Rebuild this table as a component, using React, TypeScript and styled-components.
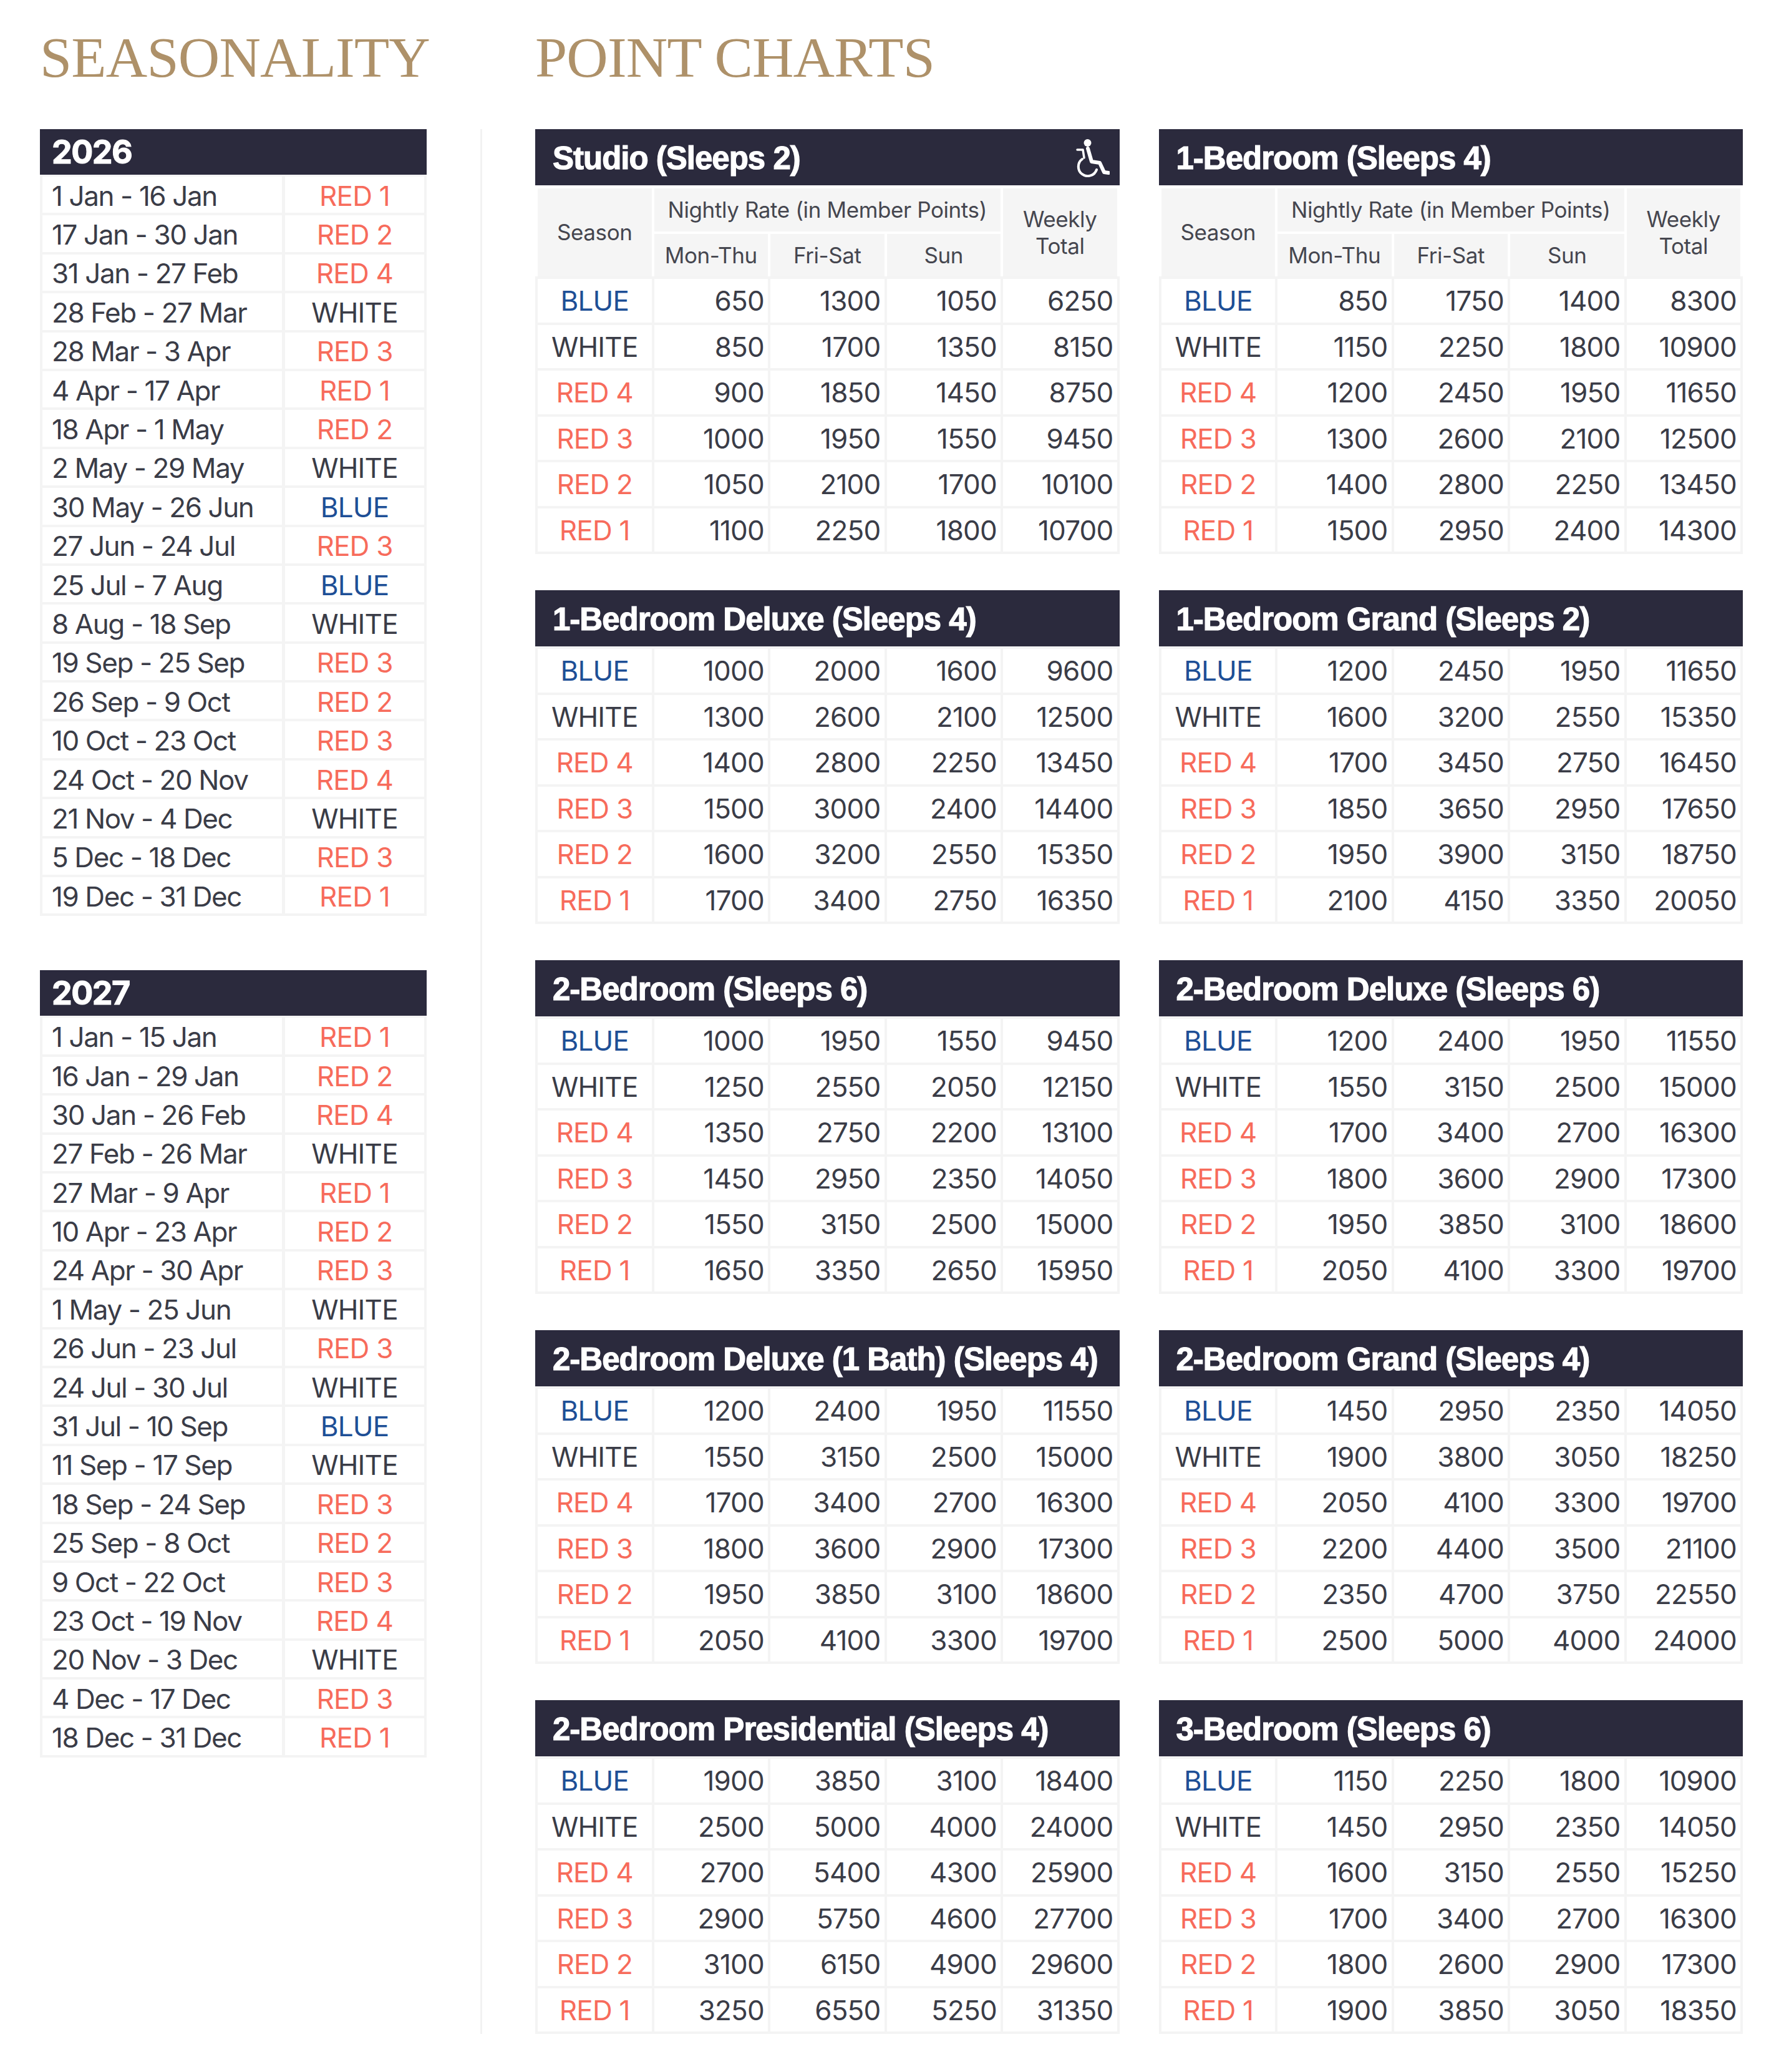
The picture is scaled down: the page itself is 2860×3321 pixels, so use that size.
import React from "react";
import styled, { createGlobalStyle } from "styled-components";

type Season = "BLUE" | "WHITE" | "RED 1" | "RED 2" | "RED 3" | "RED 4";

const GlobalStyle = createGlobalStyle`
  body {
    margin: 0;
    background: #ffffff;
    font-family: "Inter", "Liberation Sans", sans-serif;
    color: #3a3c47;
  }
`;

const seasonColor = (s: Season) =>
  s === "BLUE" ? "#1e4f96" : s === "WHITE" ? "#3a3c47" : "#f76b5b";

const year2026: [string, Season][] = [
  ["1 Jan - 16 Jan", "RED 1"],
  ["17 Jan - 30 Jan", "RED 2"],
  ["31 Jan - 27 Feb", "RED 4"],
  ["28 Feb - 27 Mar", "WHITE"],
  ["28 Mar - 3 Apr", "RED 3"],
  ["4 Apr - 17 Apr", "RED 1"],
  ["18 Apr - 1 May", "RED 2"],
  ["2 May - 29 May", "WHITE"],
  ["30 May - 26 Jun", "BLUE"],
  ["27 Jun - 24 Jul", "RED 3"],
  ["25 Jul - 7 Aug", "BLUE"],
  ["8 Aug - 18 Sep", "WHITE"],
  ["19 Sep - 25 Sep", "RED 3"],
  ["26 Sep - 9 Oct", "RED 2"],
  ["10 Oct - 23 Oct", "RED 3"],
  ["24 Oct - 20 Nov", "RED 4"],
  ["21 Nov - 4 Dec", "WHITE"],
  ["5 Dec - 18 Dec", "RED 3"],
  ["19 Dec - 31 Dec", "RED 1"],
];

const year2027: [string, Season][] = [
  ["1 Jan - 15 Jan", "RED 1"],
  ["16 Jan - 29 Jan", "RED 2"],
  ["30 Jan - 26 Feb", "RED 4"],
  ["27 Feb - 26 Mar", "WHITE"],
  ["27 Mar - 9 Apr", "RED 1"],
  ["10 Apr - 23 Apr", "RED 2"],
  ["24 Apr - 30 Apr", "RED 3"],
  ["1 May - 25 Jun", "WHITE"],
  ["26 Jun - 23 Jul", "RED 3"],
  ["24 Jul - 30 Jul", "WHITE"],
  ["31 Jul - 10 Sep", "BLUE"],
  ["11 Sep - 17 Sep", "WHITE"],
  ["18 Sep - 24 Sep", "RED 3"],
  ["25 Sep - 8 Oct", "RED 2"],
  ["9 Oct - 22 Oct", "RED 3"],
  ["23 Oct - 19 Nov", "RED 4"],
  ["20 Nov - 3 Dec", "WHITE"],
  ["4 Dec - 17 Dec", "RED 3"],
  ["18 Dec - 31 Dec", "RED 1"],
];

const seasons: Season[] = ["BLUE", "WHITE", "RED 4", "RED 3", "RED 2", "RED 1"];

interface Chart {
  title: string;
  accessible?: boolean;
  rows: number[][];
}

const charts: Chart[] = [
  {
    title: "Studio (Sleeps 2)",
    accessible: true,
    rows: [
      [650, 1300, 1050, 6250],
      [850, 1700, 1350, 8150],
      [900, 1850, 1450, 8750],
      [1000, 1950, 1550, 9450],
      [1050, 2100, 1700, 10100],
      [1100, 2250, 1800, 10700],
    ],
  },
  {
    title: "1-Bedroom (Sleeps 4)",
    rows: [
      [850, 1750, 1400, 8300],
      [1150, 2250, 1800, 10900],
      [1200, 2450, 1950, 11650],
      [1300, 2600, 2100, 12500],
      [1400, 2800, 2250, 13450],
      [1500, 2950, 2400, 14300],
    ],
  },
  {
    title: "1-Bedroom Deluxe (Sleeps 4)",
    rows: [
      [1000, 2000, 1600, 9600],
      [1300, 2600, 2100, 12500],
      [1400, 2800, 2250, 13450],
      [1500, 3000, 2400, 14400],
      [1600, 3200, 2550, 15350],
      [1700, 3400, 2750, 16350],
    ],
  },
  {
    title: "1-Bedroom Grand (Sleeps 2)",
    rows: [
      [1200, 2450, 1950, 11650],
      [1600, 3200, 2550, 15350],
      [1700, 3450, 2750, 16450],
      [1850, 3650, 2950, 17650],
      [1950, 3900, 3150, 18750],
      [2100, 4150, 3350, 20050],
    ],
  },
  {
    title: "2-Bedroom (Sleeps 6)",
    rows: [
      [1000, 1950, 1550, 9450],
      [1250, 2550, 2050, 12150],
      [1350, 2750, 2200, 13100],
      [1450, 2950, 2350, 14050],
      [1550, 3150, 2500, 15000],
      [1650, 3350, 2650, 15950],
    ],
  },
  {
    title: "2-Bedroom Deluxe (Sleeps 6)",
    rows: [
      [1200, 2400, 1950, 11550],
      [1550, 3150, 2500, 15000],
      [1700, 3400, 2700, 16300],
      [1800, 3600, 2900, 17300],
      [1950, 3850, 3100, 18600],
      [2050, 4100, 3300, 19700],
    ],
  },
  {
    title: "2-Bedroom Deluxe (1 Bath) (Sleeps 4)",
    rows: [
      [1200, 2400, 1950, 11550],
      [1550, 3150, 2500, 15000],
      [1700, 3400, 2700, 16300],
      [1800, 3600, 2900, 17300],
      [1950, 3850, 3100, 18600],
      [2050, 4100, 3300, 19700],
    ],
  },
  {
    title: "2-Bedroom Grand (Sleeps 4)",
    rows: [
      [1450, 2950, 2350, 14050],
      [1900, 3800, 3050, 18250],
      [2050, 4100, 3300, 19700],
      [2200, 4400, 3500, 21100],
      [2350, 4700, 3750, 22550],
      [2500, 5000, 4000, 24000],
    ],
  },
  {
    title: "2-Bedroom Presidential (Sleeps 4)",
    rows: [
      [1900, 3850, 3100, 18400],
      [2500, 5000, 4000, 24000],
      [2700, 5400, 4300, 25900],
      [2900, 5750, 4600, 27700],
      [3100, 6150, 4900, 29600],
      [3250, 6550, 5250, 31350],
    ],
  },
  {
    title: "3-Bedroom (Sleeps 6)",
    rows: [
      [1150, 2250, 1800, 10900],
      [1450, 2950, 2350, 14050],
      [1600, 3150, 2550, 15250],
      [1700, 3400, 2700, 16300],
      [1800, 2600, 2900, 17300],
      [1900, 3850, 3050, 18350],
    ],
  },
];

const WheelchairIcon = () => (
  <svg width="54" height="62" viewBox="0 0 54 62" fill="none">
    <circle cx="18.5" cy="7" r="6" fill="#fff" />
    <path
      d="M19 16 L25 37 L38 39 L45 54 L52 55"
      stroke="#fff"
      strokeWidth="6"
      strokeLinecap="round"
      strokeLinejoin="round"
    />
    <path
      d="M2 18 L11 18 L13 31"
      stroke="#fff"
      strokeWidth="3.5"
      strokeLinecap="round"
      strokeLinejoin="round"
    />
    <path
      d="M10 33 A15 15 0 1 0 33 50"
      stroke="#fff"
      strokeWidth="4"
      strokeLinecap="round"
    />
  </svg>
);

const App: React.FC = () => {
  return (
    <>
      <GlobalStyle />
      <Page>
        <Title $col={1}>SEASONALITY</Title>
        <Title $col={3}>POINT CHARTS</Title>

        <LeftColumn>
          {[
            { year: "2026", rows: year2026 },
            { year: "2027", rows: year2027 },
          ].map((y) => (
            <div key={y.year}>
              <YearHeader>{y.year}</YearHeader>
              <YearBody>
                {y.rows.map(([dates, season]) => (
                  <React.Fragment key={dates}>
                    <DateCell>{dates}</DateCell>
                    <SeasonCell $season={season}>{season}</SeasonCell>
                  </React.Fragment>
                ))}
              </YearBody>
            </div>
          ))}
        </LeftColumn>

        <Divider />

        <ChartGrid>
          {charts.map((chart, i) => (
            <Card key={chart.title}>
              <CardHeader>
                <span>{chart.title}</span>
                {chart.accessible && <WheelchairIcon />}
              </CardHeader>
              {i < 2 && (
                <SubHead>
                  <HeadCell $rowSpan>Season</HeadCell>
                  <HeadCell $colSpan>Nightly Rate (in Member Points)</HeadCell>
                  <HeadCell $rowSpan>
                    Weekly
                    <br />
                    Total
                  </HeadCell>
                  <HeadCell>Mon-Thu</HeadCell>
                  <HeadCell>Fri-Sat</HeadCell>
                  <HeadCell>Sun</HeadCell>
                </SubHead>
              )}
              <ChartBody>
                {chart.rows.map((row, r) => (
                  <React.Fragment key={r}>
                    <SeasonCell $season={seasons[r]} $tall>
                      {seasons[r]}
                    </SeasonCell>
                    {row.map((v, c) => (
                      <NumCell key={c}>{v}</NumCell>
                    ))}
                  </React.Fragment>
                ))}
              </ChartBody>
            </Card>
          ))}
        </ChartGrid>
      </Page>
    </>
  );
};

const Page = styled.div`
  width: 2860px;
  box-sizing: border-box;
  padding: 46px 66px 61px 64px;
  display: grid;
  grid-template-columns: 620px 174px 1936px;
  grid-template-rows: 92px auto;
  row-gap: 69px;
`;

const Title = styled.h1<{ $col: number }>`
  grid-column: ${(p) => p.$col};
  grid-row: 1;
  margin: 0;
  font-family: "Liberation Serif", "DejaVu Serif", serif;
  font-weight: 400;
  font-size: 92px;
  line-height: 92px;
  letter-spacing: -0.8px;
  color: #ae9169;
  white-space: nowrap;
`;

const LeftColumn = styled.div`
  grid-column: 1;
  grid-row: 2;
  display: flex;
  flex-direction: column;
  gap: 87px;
`;

const YearHeader = styled.div`
  height: 73px;
  background: #2b2a3d;
  color: #ffffff;
  display: flex;
  align-items: center;
  padding-left: 19px;
  font-weight: 700;
  font-size: 52px;
  letter-spacing: -1.5px;
  -webkit-text-stroke: 1px #ffffff;
`;

const YearBody = styled.div`
  background: #f4f4f4;
  padding: 3px 4px 4px;
  display: grid;
  grid-template-columns: 384px 1fr;
  gap: 4px 5px;
`;

const BaseCell = styled.div`
  background: #ffffff;
  display: flex;
  align-items: center;
  font-size: 44px;
  letter-spacing: -0.8px;
  white-space: nowrap;
`;

const DateCell = styled(BaseCell)`
  height: 58.4px;
  padding: 3px 0 0 15px;
  box-sizing: border-box;
  color: #3a3c47;
  letter-spacing: -1.4px;
`;

const SeasonCell = styled(BaseCell)<{ $season: Season; $tall?: boolean }>`
  height: ${(p) => (p.$tall ? "69.5px" : "58.4px")};
  padding-top: ${(p) => (p.$tall ? "1px" : "3px")};
  box-sizing: border-box;
  justify-content: center;
  color: ${(p) => seasonColor(p.$season)};
`;

const Divider = styled.div`
  grid-column: 2;
  grid-row: 2;
  justify-self: center;
  width: 3px;
  background: #f2f2f2;
`;

const ChartGrid = styled.div`
  grid-column: 3;
  grid-row: 2;
  display: grid;
  grid-template-columns: 1fr 1fr;
  column-gap: 63px;
  row-gap: 58px;
  align-items: start;
`;

const Card = styled.div`
  display: flex;
  flex-direction: column;
`;

const CardHeader = styled.div`
  height: 90px;
  background: #2b2a3d;
  color: #ffffff;
  display: flex;
  align-items: center;
  justify-content: space-between;
  padding: 2px 16px 0 28px;
  box-sizing: border-box;
  font-family: "Liberation Sans", "Inter", sans-serif;
  font-weight: 700;
  font-size: 51px;
  letter-spacing: -1px;
  -webkit-text-stroke: 1.2px #ffffff;
  white-space: nowrap;
`;

const SubHead = styled.div`
  margin-top: 5px;
  padding: 0 4px;
  display: grid;
  grid-template-columns: repeat(5, 1fr);
  grid-template-rows: 69px 68px;
  gap: 4px;
`;

const HeadCell = styled.div<{ $rowSpan?: boolean; $colSpan?: boolean }>`
  background: #f5f5f5;
  display: flex;
  align-items: center;
  justify-content: center;
  text-align: center;
  font-size: 35px;
  line-height: 43px;
  letter-spacing: -0.4px;
  color: #45464f;
  white-space: nowrap;
  ${(p) => (p.$rowSpan ? "grid-row: span 2;" : "")}
  ${(p) => (p.$colSpan ? "grid-column: span 3;" : "")}
`;

const ChartBody = styled.div`
  background: #f4f4f4;
  padding: 4px;
  display: grid;
  grid-template-columns: repeat(5, 1fr);
  gap: 4px;
`;

const NumCell = styled(BaseCell)`
  height: 69.5px;
  padding: 1px 6px 0 0;
  box-sizing: border-box;
  justify-content: flex-end;
  color: #3a3c47;
`;

export default App;
